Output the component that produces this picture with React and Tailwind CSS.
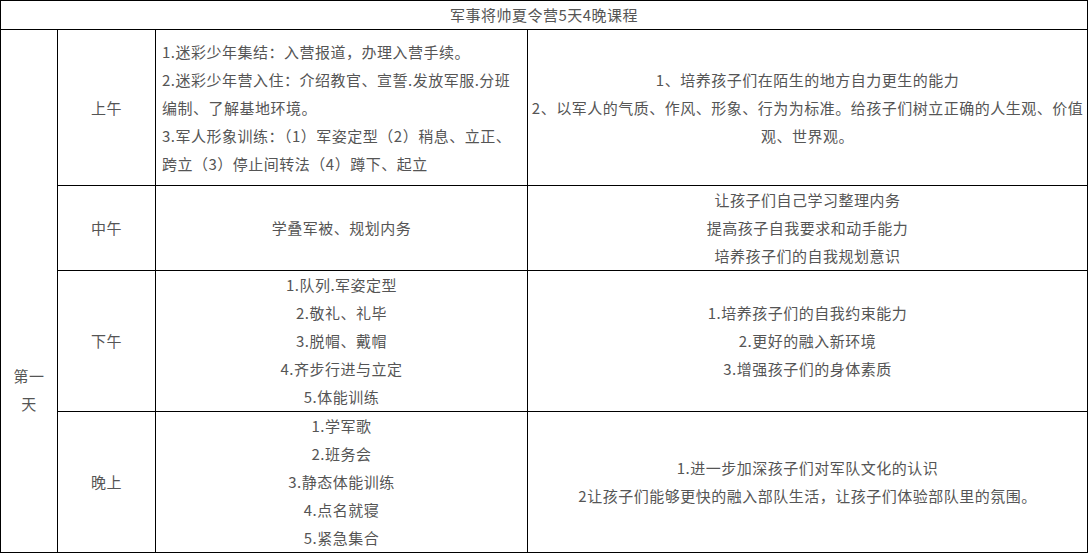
import React from 'react';

const morning = [
  '1.迷彩少年集结：入营报道，办理入营手续。',
  '2.迷彩少年营入住：介绍教官、宣誓.发放军服.分班',
  '编制、了解基地环境。',
  '3.军人形象训练：（1）军姿定型（2）稍息、立正、',
  '跨立（3）停止间转法（4）蹲下、起立',
];

const rows = [
  {
    label: '上午',
    content: morning,
    align: 'left',
    goals: [
      '1、培养孩子们在陌生的地方自力更生的能力',
      '2、以军人的气质、作风、形象、行为为标准。给孩子们树立正确的人生观、价值',
      '观、世界观。',
    ],
  },
  {
    label: '中午',
    content: ['学叠军被、规划内务'],
    goals: ['让孩子们自己学习整理内务', '提高孩子自我要求和动手能力', '培养孩子们的自我规划意识'],
  },
  {
    label: '下午',
    content: ['1.队列.军姿定型', '2.敬礼、礼毕', '3.脱帽、戴帽', '4.齐步行进与立定', '5.体能训练'],
    goals: ['1.培养孩子们的自我约束能力', '2.更好的融入新环境', '3.增强孩子们的身体素质'],
  },
  {
    label: '晚上',
    content: ['1.学军歌', '2.班务会', '3.静态体能训练', '4.点名就寝', '5.紧急集合'],
    goals: ['1.进一步加深孩子们对军队文化的认识', '2让孩子们能够更快的融入部队生活，让孩子们体验部队里的氛围。'],
  },
];

const Lines = ({ lines }) => (
  <div>
    {lines.map((l, i) => (
      <div key={i} className="whitespace-nowrap">{l}</div>
    ))}
  </div>
);

export default function App() {
  return (
    <div className="w-[1088px] h-[553px] bg-white font-['Noto_Sans_CJK_SC',sans-serif] text-[15px] leading-[28px] tracking-[0.5px] text-[#555]">
      <div className="grid grid-cols-[56px_97px_371px_559px] grid-rows-[28px_155px_84px_140px_140px] gap-px p-px bg-black">
        {/* title */}
        <div className="col-span-4 bg-white flex items-center justify-center">
          军事将帅夏令营5天4晚课程
        </div>

        {/* day column */}
        <div className="row-span-4 bg-white flex flex-col items-center justify-center pt-[198px] px-[8px] text-center">
          <div>第一</div>
          <div>天</div>
        </div>

        {rows.map((r) => (
          <React.Fragment key={r.label}>
            <div className="bg-white flex items-center justify-center">{r.label}</div>
            <div
              className={
                r.align === 'left'
                  ? 'bg-white flex items-center pl-[6px]'
                  : 'bg-white flex items-center justify-center text-center'
              }
            >
              <Lines lines={r.content} />
            </div>
            <div className="bg-white flex items-center justify-center text-center">
              <Lines lines={r.goals} />
            </div>
          </React.Fragment>
        ))}
      </div>
    </div>
  );
}
